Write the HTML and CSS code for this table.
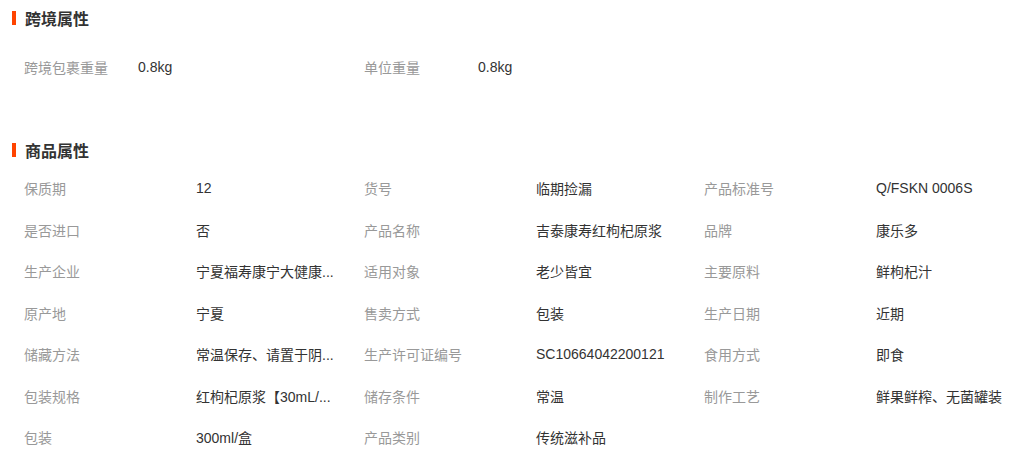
FILE: index.html
```html
<!DOCTYPE html>
<html lang="zh-CN">
<head>
  <meta charset="UTF-8">
  <title>商品属性</title>
  <link rel="stylesheet" href="styles.css">
</head>
<body>
  <div class="section">
    <h3 class="section-title">跨境属性</h3>
    <div class="attr-grid cross">
      <div class="attr"><span class="attr-name">跨境包裹重量</span><span class="attr-value">0.8kg</span></div>
      <div class="attr"><span class="attr-name">单位重量</span><span class="attr-value">0.8kg</span></div>
    </div>
  </div>

  <div class="section">
    <h3 class="section-title">商品属性</h3>
    <div class="attr-grid">
      <div class="attr"><span class="attr-name">保质期</span><span class="attr-value">12</span></div>
      <div class="attr"><span class="attr-name">货号</span><span class="attr-value">临期捡漏</span></div>
      <div class="attr"><span class="attr-name">产品标准号</span><span class="attr-value">Q/FSKN 0006S</span></div>
      <div class="attr"><span class="attr-name">是否进口</span><span class="attr-value">否</span></div>
      <div class="attr"><span class="attr-name">产品名称</span><span class="attr-value">吉泰康寿红枸杞原浆</span></div>
      <div class="attr"><span class="attr-name">品牌</span><span class="attr-value">康乐多</span></div>
      <div class="attr"><span class="attr-name">生产企业</span><span class="attr-value" title="宁夏福寿康宁大健康产业有限公司">宁夏福寿康宁大健康...</span></div>
      <div class="attr"><span class="attr-name">适用对象</span><span class="attr-value">老少皆宜</span></div>
      <div class="attr"><span class="attr-name">主要原料</span><span class="attr-value">鲜枸杞汁</span></div>
      <div class="attr"><span class="attr-name">原产地</span><span class="attr-value">宁夏</span></div>
      <div class="attr"><span class="attr-name">售卖方式</span><span class="attr-value">包装</span></div>
      <div class="attr"><span class="attr-name">生产日期</span><span class="attr-value">近期</span></div>
      <div class="attr"><span class="attr-name">储藏方法</span><span class="attr-value" title="常温保存、请置于阴凉干燥处">常温保存、请置于阴...</span></div>
      <div class="attr"><span class="attr-name">生产许可证编号</span><span class="attr-value">SC10664042200121</span></div>
      <div class="attr"><span class="attr-name">食用方式</span><span class="attr-value">即食</span></div>
      <div class="attr"><span class="attr-name">包装规格</span><span class="attr-value" title="红枸杞原浆【30mL/袋*10袋】">红枸杞原浆【30mL/...</span></div>
      <div class="attr"><span class="attr-name">储存条件</span><span class="attr-value">常温</span></div>
      <div class="attr"><span class="attr-name">制作工艺</span><span class="attr-value">鲜果鲜榨、无菌罐装</span></div>
      <div class="attr"><span class="attr-name">包装</span><span class="attr-value">300ml/盒</span></div>
      <div class="attr"><span class="attr-name">产品类别</span><span class="attr-value">传统滋补品</span></div>
    </div>
  </div>
</body>
</html>
```

FILE: styles.css
```css
body {
  margin: 0;
  background: #fff;
  font-family: "Liberation Sans", "Noto Sans CJK SC", sans-serif;
  font-size: 14px;
  color: #333;
}
.section { margin-bottom: 44px; }
.section:last-child { margin-bottom: 0; }
.section-title {
  display: flex; align-items: center;
  margin: 0; padding-left: 12px;
  height: 36px;
  font-size: 16px; font-weight: bold; color: #333;
}
.section-title::before {
  content: ""; width: 4px; height: 14px;
  background: #ff4400; margin-right: 9px;
}
.attr-grid {
  display: grid;
  grid-template-columns: repeat(3, 340px);
}
.attr-grid.cross { padding-top: 10px; }
.attr {
  display: flex; align-items: center;
  height: 41.5px; padding-left: 24px;
}
.attr-name { width: 172px; flex: none; color: #999; }
.cross .attr-name { width: 114px; }
.attr-value { white-space: nowrap; }
```
